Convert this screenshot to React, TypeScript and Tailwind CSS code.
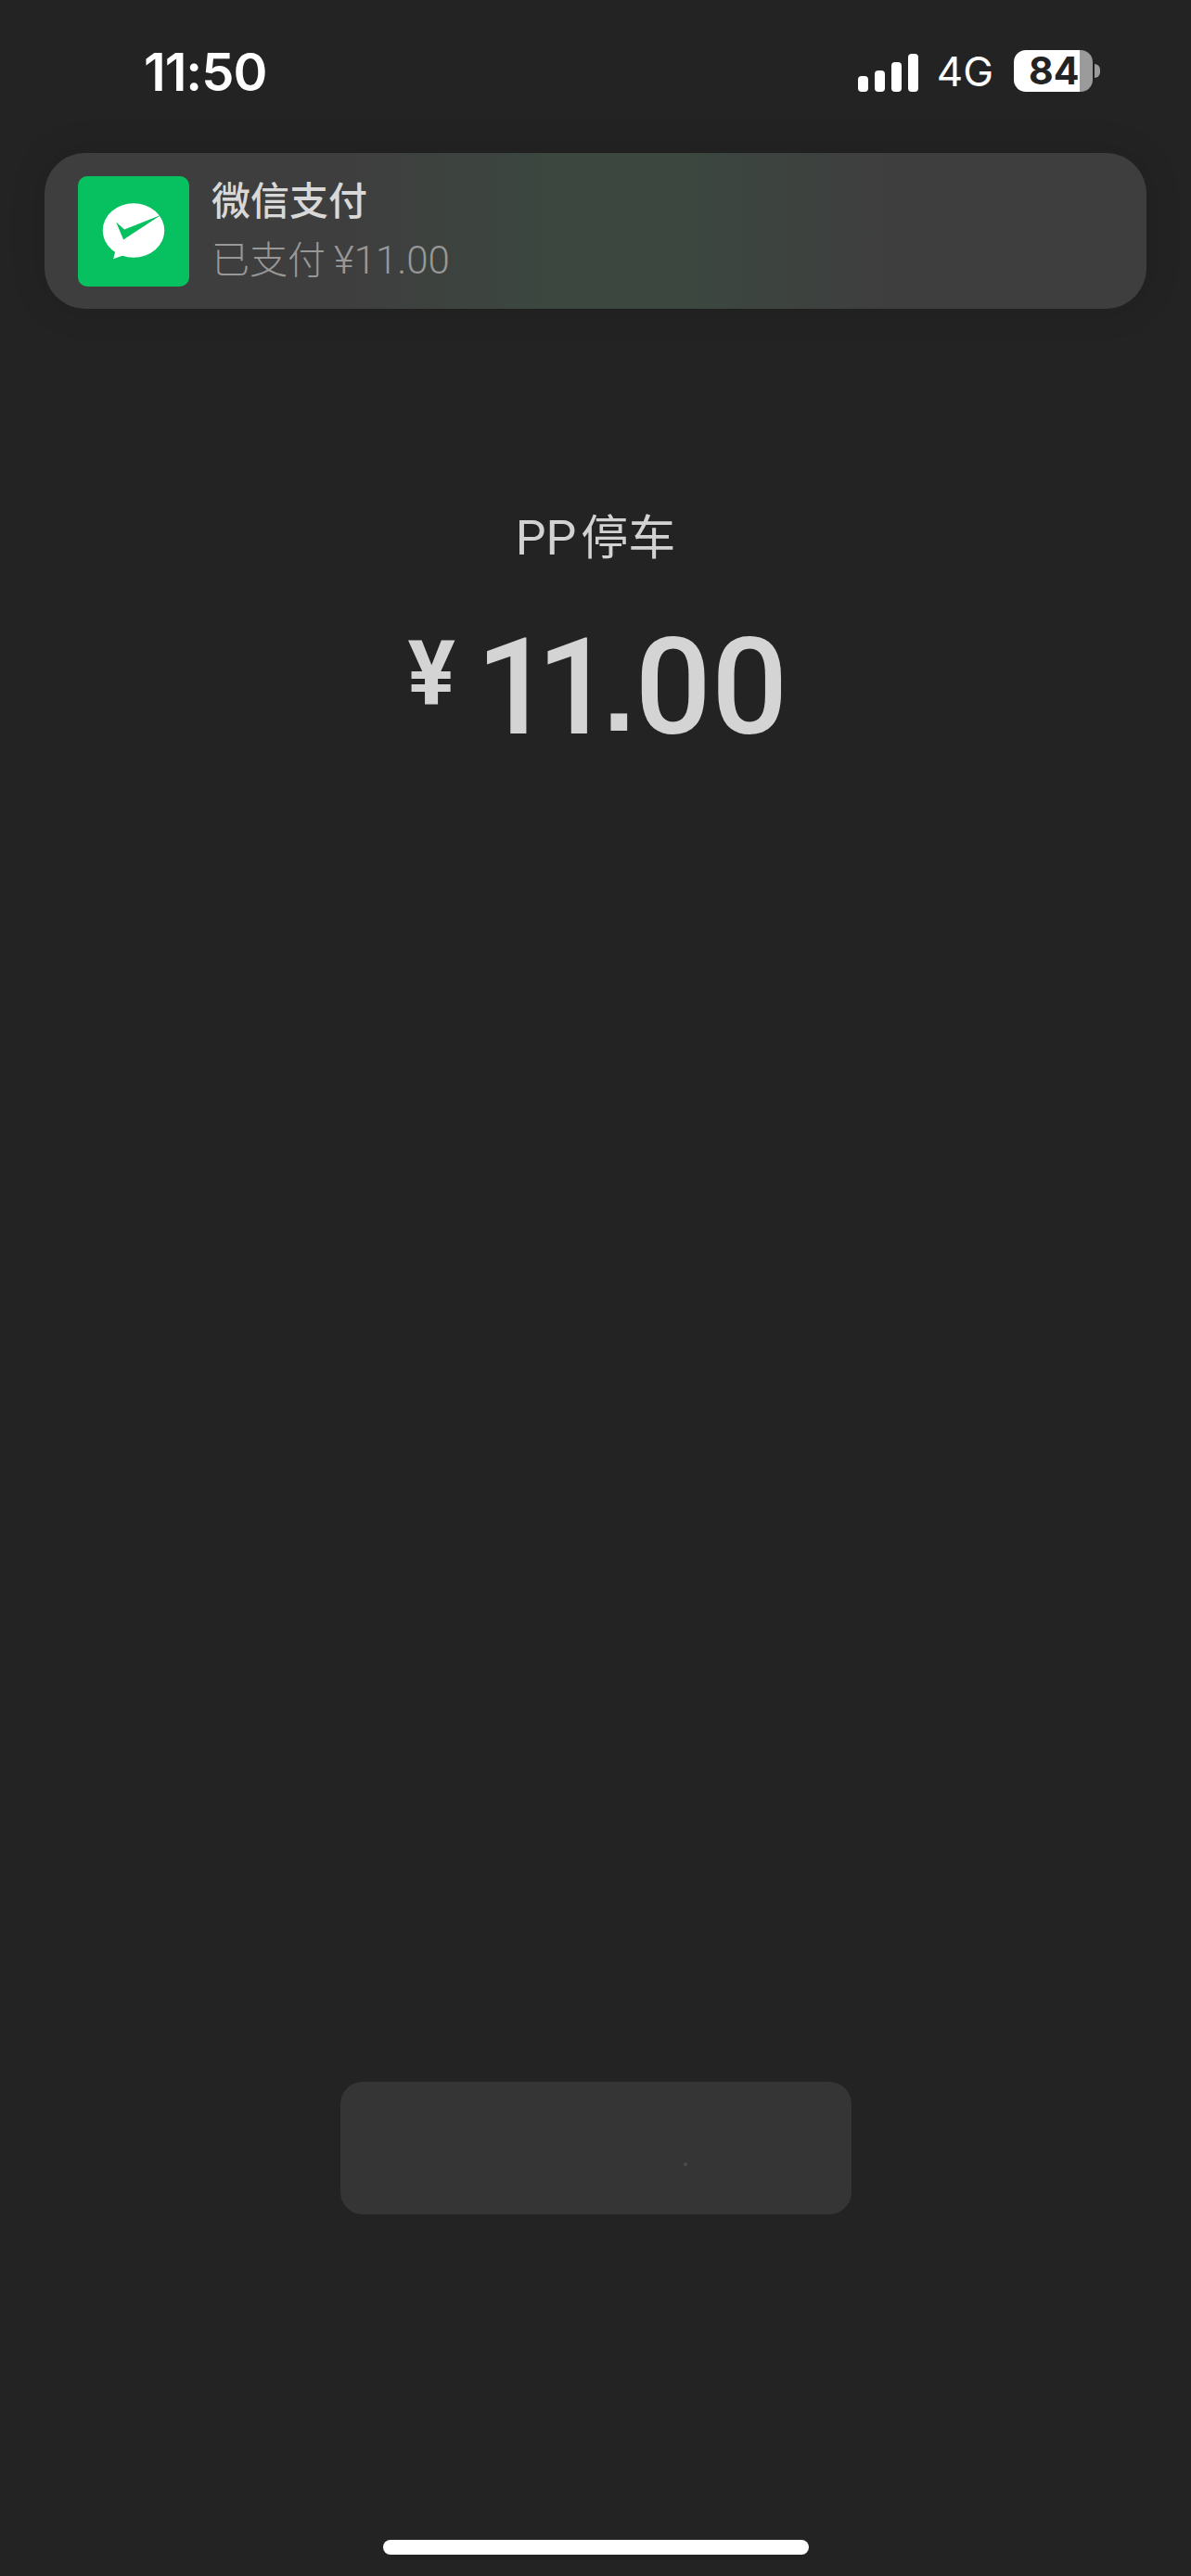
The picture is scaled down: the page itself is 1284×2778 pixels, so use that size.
import React from 'react';

const sans = "font-['Roboto','Noto_Sans_CJK_SC',sans-serif]";
const inter = "font-['Inter',sans-serif]";

const StatusBar = () => (
  <div className="flex h-[165px] items-start justify-between pl-[155px] pr-[98px] pt-[53px]">
    <div className={`${inter} text-[56px] font-semibold leading-[50px] tracking-[-1px] text-white`}>11:50</div>
    <div className="flex items-center">
      {/* signal */}
      <div className="flex h-[45px] items-end gap-[7px]">
        <div className="h-[17px] w-[11px] rounded-[4px] bg-white" />
        <div className="h-[23px] w-[11px] rounded-[4px] bg-white" />
        <div className="h-[32px] w-[11px] rounded-[4px] bg-white" />
        <div className="h-[41px] w-[11px] rounded-[4px] bg-white" />
      </div>
      <div className={`ml-[20px] ${inter} pt-[2px] text-[44px] leading-[45px] text-white`}>4G</div>
      {/* battery */}
      <div className="ml-[22px] flex h-[45px] w-[85px] items-center rounded-[13px] bg-[linear-gradient(90deg,#ffffff_71px,#9b9b9b_71px)] pl-[16px]">
        <span className={`${inter} text-[41px] font-bold leading-[45px] text-[#232323]`}>84</span>
      </div>
      <div className="ml-[2px] h-[15px] w-[6px] rounded-r-full bg-[#9b9b9b]" />
    </div>
  </div>
);

const PayIcon = () => (
  <svg viewBox="0 0 120 120" className="h-[119px] w-[120px] shrink-0 rounded-[10px] bg-[#07c160]">
    <ellipse cx="60" cy="59" rx="33.5" ry="29.5" fill="#fff" />
    <path d="M40 82 L38 90 L52 85 Z" fill="#fff" />
    <path d="M41 50 L49 69 L90 42 L50 58 Z" fill="#07c160" />
  </svg>
);

const Banner = () => (
  <div className="mx-[48px] flex h-[168px] items-center rounded-[44px] bg-[linear-gradient(90deg,#3e3e3e_0%,#3e3e3e_27%,#3c4740_46%,#3c4740_58%,#3e3e3e_77%,#3e3e3e_100%)] pl-[36px] shadow-[0_0_40px_rgba(0,0,0,0.12)]">
    <PayIcon />
    <div className={`ml-[24px] flex flex-col ${sans}`}>
      <div className="text-[42px] font-medium leading-[58px] text-[#d8d8d8]">微信支付</div>
      <div className="flex pt-[5px] text-[41px] font-light leading-[58px] text-[#989898]">
        已支付<span className="ml-[9px] text-[42px]">¥11.00</span>
      </div>
    </div>
  </div>
);

export default function App() {
  return (
    <div className="flex h-[2778px] w-[1284px] flex-col overflow-hidden bg-[#232323]">
      <StatusBar />
      <Banner />
      <div className={`mt-[218px] flex justify-center text-[51px] font-normal leading-[60px] text-[#d2d2d2] ${sans}`}>
        <span className="text-[52px]">PP</span>
        <span className="ml-[5px]">停车</span>
      </div>
      <div className={`mt-[55px] flex items-start justify-center pl-[5px] text-[#d4d4d4] ${sans}`}>
        <span className="text-[96px] font-bold leading-[120px]">¥</span>
        <span className="ml-[22px] flex text-[145px] font-medium leading-[150px]">
          <span className="tracking-[-17px]">1</span>
          <span className="tracking-[-11px]">1</span>
          <span className="font-['Liberation_Sans',sans-serif] text-[125px] font-bold leading-[158px] tracking-[0px]">.</span>
          <span>00</span>
        </span>
      </div>
      <div className="relative mx-auto mt-[1421px] h-[143px] w-[551px] rounded-[24px] bg-[#353535]">
        <div className="absolute left-[370px] top-[87px] h-[4px] w-[4px] rounded-full bg-[#4c4c4c]" />
      </div>
      <div className="mx-auto mt-[351px] h-[16px] w-[459px] rounded-full bg-white" />
    </div>
  );
}
